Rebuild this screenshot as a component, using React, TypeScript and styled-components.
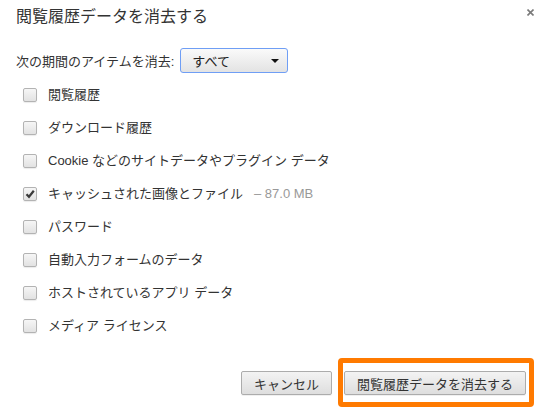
import React from "react";
import styled, { createGlobalStyle } from "styled-components";

const Global = createGlobalStyle`
  html, body { margin: 0; padding: 0; background: #fff; }
  body {
    font-family: "Liberation Sans", "Noto Sans CJK JP", sans-serif;
    color: #333;
  }
`;

const Dialog = styled.div`
  width: 540px;
  height: 411px;
  box-sizing: border-box;
  display: flex;
  flex-direction: column;
  padding: 7px 14px 0 16px;
  background: #fff;
`;

const Header = styled.div`
  display: flex;
  justify-content: space-between;
  align-items: flex-start;
`;

const Title = styled.h1`
  margin: 0;
  font-size: 16px;
  line-height: 20px;
  font-weight: normal;
  color: #333;
`;

const Close = styled.button`
  border: 0;
  padding: 0;
  margin: 2px -8px 0 0;
  background: none;
  width: 7px;
  height: 7px;
  display: flex;
  svg { display: block; }
`;

const PeriodRow = styled.div`
  display: flex;
  align-items: center;
  gap: 6px;
  margin-top: 21px;
  font-size: 13px;
`;

const Select = styled.div`
  box-sizing: border-box;
  width: 108px;
  height: 25px;
  border: 1px solid #6f9ef5;
  border-radius: 3px;
  background: linear-gradient(#fafafa, #e3e3e3);
  display: flex;
  align-items: center;
  justify-content: space-between;
  padding: 0 8px 0 11px;
  font-size: 13px;
  color: #222;
`;

const Arrow = styled.span`
  width: 0;
  height: 0;
  border-left: 4px solid transparent;
  border-right: 4px solid transparent;
  border-top: 4px solid #111;
`;

const List = styled.div`
  display: flex;
  flex-direction: column;
  margin-top: 5px;
  padding-left: 7px;
`;

const Row = styled.label`
  display: flex;
  align-items: center;
  height: 33px;
  font-size: 13px;
  line-height: 16px;
  color: #333;
`;

const Box = styled.span`
  box-sizing: border-box;
  width: 14px;
  height: 14px;
  margin-right: 11px;
  border: 1px solid #b3b3b3;
  border-radius: 2px;
  background: linear-gradient(#f6f6f6, #e2e2e2);
  box-shadow: 0 1px 1px rgba(0, 0, 0, 0.08);
  display: flex;
  align-items: center;
  justify-content: center;
`;

const Size = styled.span`
  margin-left: 11px;
  color: #999;
`;

const Footer = styled.div`
  display: flex;
  justify-content: flex-end;
  gap: 12px;
  margin-top: 29px;
`;

const Button = styled.button`
  position: relative;
  box-sizing: border-box;
  height: 24px;
  padding: 0 12px;
  border: 1px solid #acacac;
  border-radius: 2px;
  background: linear-gradient(#f3f3f3, #dedede);
  box-shadow: 0 1px 0 rgba(0, 0, 0, 0.06);
  font-family: inherit;
  font-size: 13px;
  color: #333;
`;

const Highlight = styled.span`
  position: absolute;
  top: -14px;
  left: -7px;
  right: -9px;
  bottom: -13px;
  border: 5px solid #ff7a00;
  border-radius: 4px;
  pointer-events: none;
`;

const items: { label: string; checked?: boolean; size?: string }[] = [
  { label: "閲覧履歴" },
  { label: "ダウンロード履歴" },
  { label: "Cookie などのサイトデータやプラグイン データ" },
  { label: "キャッシュされた画像とファイル", checked: true, size: "– 87.0 MB" },
  { label: "パスワード" },
  { label: "自動入力フォームのデータ" },
  { label: "ホストされているアプリ データ" },
  { label: "メディア ライセンス" },
];

export default function App() {
  return (
    <>
      <Global />
      <Dialog>
        <Header>
          <Title>閲覧履歴データを消去する</Title>
          <Close aria-label="閉じる">
            <svg width="7" height="7" viewBox="0 0 7 7">
              <path d="M0.5 0.5 L6.5 6.5 M6.5 0.5 L0.5 6.5" stroke="#7a7a7a" strokeWidth="1.6" />
            </svg>
          </Close>
        </Header>
        <PeriodRow>
          <span>次の期間のアイテムを消去:</span>
          <Select>
            <span>すべて</span>
            <Arrow />
          </Select>
        </PeriodRow>
        <List>
          {items.map((it) => (
            <Row key={it.label}>
              <Box>
                {it.checked && (
                  <svg width="10" height="10" viewBox="0 0 10 10">
                    <path d="M1.5 5.2 L4 7.8 L8.8 1.8" fill="none" stroke="#3a3a3a" strokeWidth="2.2" />
                  </svg>
                )}
              </Box>
              <span>{it.label}</span>
              {it.size && <Size>{it.size}</Size>}
            </Row>
          ))}
        </List>
        <Footer>
          <Button>キャンセル</Button>
          <Button>
            閲覧履歴データを消去する
            <Highlight />
          </Button>
        </Footer>
      </Dialog>
    </>
  );
}
